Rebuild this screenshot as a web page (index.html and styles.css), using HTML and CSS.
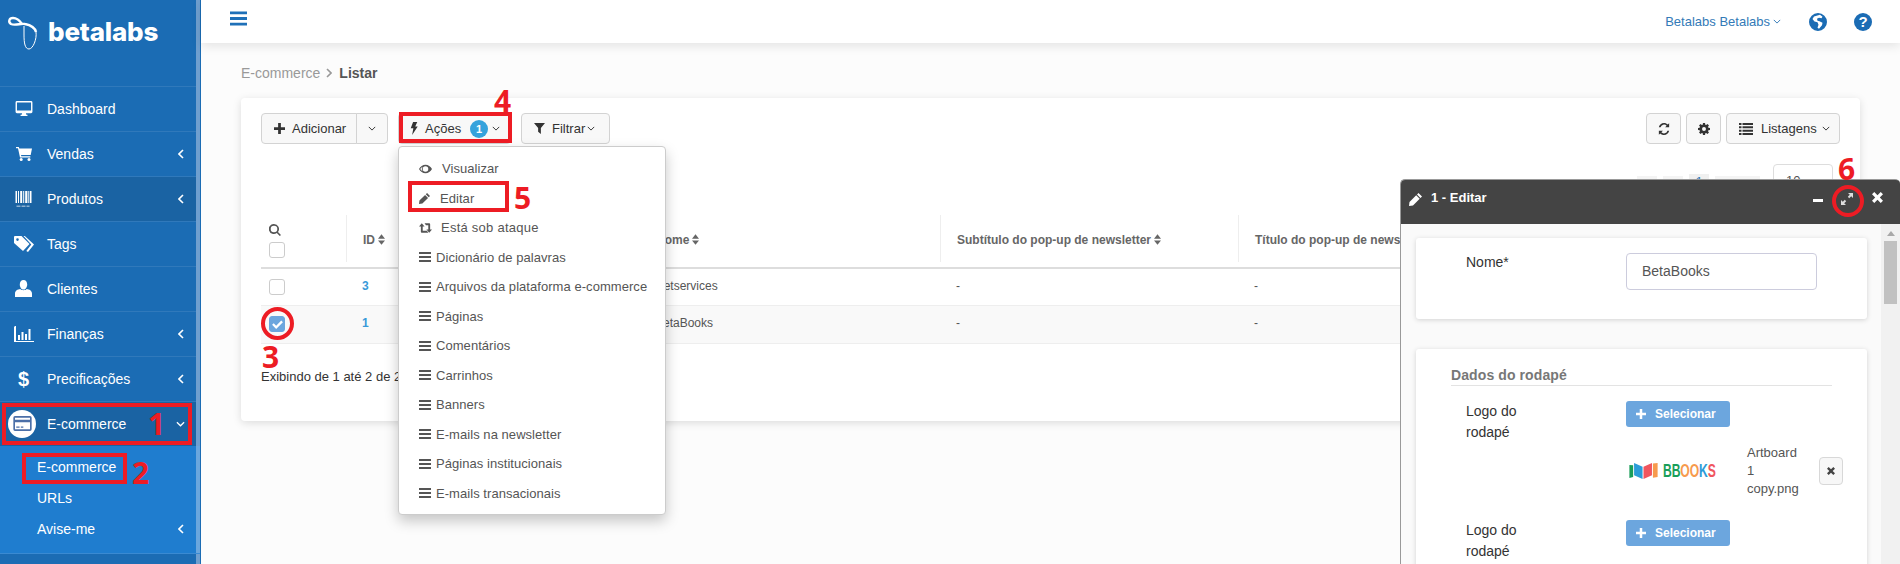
FILE: index.html
```html
<!DOCTYPE html>
<html lang="pt-BR">
<head>
<meta charset="utf-8">
<title>E-commerce - Listar</title>
<link rel="stylesheet" href="styles.css">
</head>
<body>
<svg class="sprite" aria-hidden="true">
  <symbol id="i-desktop" viewBox="0 0 18 16"><path fill-rule="evenodd" d="M1.5 0h15A1.5 1.5 0 0 1 18 1.5v10a1.5 1.5 0 0 1-1.5 1.5H11l.5 1.6h1.2V16H5.300v-1.400h1.200L7 13H1.500A1.500 1.500 0 0 1 0 11.500v-10A1.500 1.500 0 0 1 1.500 0zM1.500 1.500V10h15V1.500z"/></symbol>
  <symbol id="i-cart" viewBox="0 0 16 14"><path d="M0 0h2.800l.5 1.600H16l-1.300 6.300H5l.3 1.300h9v1.400H4L2 1.300H0z"/><circle cx="5.200" cy="12.500" r="1.500"/><circle cx="13" cy="12.500" r="1.500"/></symbol>
  <symbol id="i-barcode" viewBox="0 0 16 16"><path d="M0 0h1.500v12H0zM2.500 0h1v12h-1zM4.700 0h2v12h-2zM7.700 0h1v12h-1zM9.700 0h2.200v12H9.700zM12.800 0h1v12h-1zM14.500 0H16v12h-1.500zM1 14.800h4v.8H1zM6 14.800h4v.8H6zM11 14.800h3v.8h-3z"/></symbol>
  <symbol id="i-tags" viewBox="0 0 20 16"><path fill-rule="evenodd" d="M1 0h6.500L15.500 8 9 15 0 7V1a1 1 0 0 1 1-1zm2.500 2.300a1.300 1.300 0 1 0 0 2.600 1.300 1.300 0 0 0 0-2.600z"/><path d="M9.500 0h1.300L20 8.500 14 16l-1.700-1 5-6.500z"/></symbol>
  <symbol id="i-user" viewBox="0 0 16 16"><path d="M8 0c2.200 0 3.500 1.800 3.500 4.200S10 9 8 9 4.500 6.600 4.500 4.200 5.800 0 8 0zM5 8.500C6 10 10 10 11 8.500c2.500.5 5 1.300 5 4.500v3H0v-3c0-3.200 2.500-4 5-4.500z"/></symbol>
  <symbol id="i-chart" viewBox="0 0 20 16"><path d="M1 0h1v15h18v1H0V1zM4 9h2v5H4zM7.500 6h2v8h-2zM11 8h2v6h-2zM14.500 3h2v11h-2z"/></symbol>
  <symbol id="i-card" viewBox="0 0 22 18"><path fill-rule="evenodd" d="M2 0h18a2 2 0 0 1 2 2v14a2 2 0 0 1-2 2H2a2 2 0 0 1-2-2V2a2 2 0 0 1 2-2zm0 2v2.500h18V2zm0 5.500V16h18V7.500zM3.500 12.500h4V14h-4zm5.500 0h3V14H9z"/></symbol>
  <symbol id="i-plus" viewBox="0 0 12 12"><path d="M4.500 0h3v4.500H12v3H7.500V12h-3V7.500H0v-3h4.500z"/></symbol>
  <symbol id="i-bolt" viewBox="0 0 8 14"><path d="M3 0h4.500L5.300 4.800H8L2 14l1.300-7.200H.5z"/></symbol>
  <symbol id="i-filter" viewBox="0 0 12 12"><path d="M0 0h12L7.500 5.500V12l-3-2.500v-4z"/></symbol>
  <symbol id="i-refresh" viewBox="0 0 14 14"><path d="M7 0c1.800 0 3.300.7 4.400 1.800L13 .3v4.700H8.300l1.800-1.800A4.200 4.200 0 0 0 3 5H1C1.600 2.100 4 0 7 0zM13 9C12.400 11.900 10 14 7 14c-1.800 0-3.300-.7-4.400-1.800L1 13.700V9h4.700l-1.800 1.800A4.200 4.200 0 0 0 11 9z"/></symbol>
  <symbol id="i-cog" viewBox="0 0 14 14"><path fill-rule="evenodd" d="M5.800 0h2.400l.3 1.900 1 .4L11 1.200l1.800 1.800-1.100 1.500.4 1 1.900.3v2.400l-1.900.3-.4 1 1.100 1.500L11 12.800l-1.500-1.100-1 .4-.3 1.900H5.800l-.3-1.900-1-.4L3 12.800 1.200 11l1.100-1.500-.4-1L0 8.200V5.800l1.900-.3.4-1L1.200 3 3 1.200l1.500 1.100 1-.4zM7 4.700a2.300 2.300 0 1 0 0 4.600 2.300 2.300 0 0 0 0-4.600z"/></symbol>
  <symbol id="i-list" viewBox="0 0 14 12"><path d="M0 0h2.500v2H0zM3.500 0H14v2H3.500zM0 3.300h2.500v2H0zM3.500 3.300H14v2H3.500zM0 6.700h2.500v2H0zM3.500 6.700H14v2H3.500zM0 10h2.500v2H0zM3.500 10H14v2H3.500z"/></symbol>
  <symbol id="i-search" viewBox="0 0 12 12"><path fill-rule="evenodd" d="M5 0a5 5 0 0 1 4 8l3 3-1.200 1-3-3A5 5 0 1 1 5 0zm0 1.700a3.300 3.300 0 1 0 0 6.600 3.300 3.300 0 0 0 0-6.600z"/></symbol>
  <symbol id="i-sort" viewBox="0 0 8 12"><path d="M4 0l4 5H0zM0 7h8l-4 5z"/></symbol>
  <symbol id="i-eye" viewBox="0 0 14 9"><path fill-rule="evenodd" d="M7 0c3 0 5.500 1.800 7 4.500C12.500 7.200 10 9 7 9S1.500 7.200 0 4.500C1.500 1.800 4 0 7 0zm0 1.500a3 3 0 1 0 0 6 3 3 0 0 0 0-6zM1.300 4.500c.7 1 1.500 1.800 2.500 2.400a4 4 0 0 1 0-4.800c-1 .6-1.800 1.400-2.500 2.400z"/></symbol>
  <symbol id="i-pencil" viewBox="0 0 13 13"><path d="M9.500 0L13 3.500l-1.500 1.500L8 1.500zM7.200 2.300l3.500 3.500L4 12.500 0 13l.5-4z"/></symbol>
  <symbol id="i-retweet" viewBox="0 0 14 10"><path d="M3 0l3 3.500H4V8h4.500L10 10H3a1 1 0 0 1-1-1V3.500H0zM6 0h5a1 1 0 0 1 1 1v5.500h2L11 10 8 6.500h2V2H7.500z"/></symbol>
  <symbol id="i-bars" viewBox="0 0 12 10"><path d="M0 0h12v2H0zM0 4h12v2H0zM0 8h12v2H0z"/></symbol>
  <symbol id="i-expand" viewBox="0 0 12 12"><path d="M7 0h5v5l-1.800-1.800-2 2-1.400-1.400 2-2zM5 12H0V7l1.800 1.800 2-2 1.400 1.400-2 2z"/></symbol>
  <symbol id="i-times" viewBox="0 0 12 12"><path d="M2.500 0L6 3.500 9.500 0 12 2.500 8.500 6 12 9.500 9.500 12 6 8.500 2.500 12 0 9.500 3.500 6 0 2.500z"/></symbol>
  <symbol id="i-globe" viewBox="0 0 18 18"><path fill-rule="evenodd" d="M9 0a9 9 0 1 1 0 18A9 9 0 0 1 9 0zM5 3.500L3.500 6l2 2.500 3 .8 1 2.500-1 3 1.500 1 3-3.500.5-2.500-3-1.500-2-.5-.5-2 2-1 2.500.5 1-1.500-2.500-2z"/></symbol>
  <symbol id="i-check" viewBox="0 0 12 10"><path d="M1.800 3.600L4.500 6.300 10.200.6 12 2.400 4.500 9.900 0 5.400z"/></symbol>
</svg>

<div class="app">
  <aside class="sidebar">
    <div class="brand">
      <svg class="brand-mark" viewBox="0 0 32 36"><path d="M6 3C2 3 1 7 4 9c4 2 10-1 14 0 5 1 10 4 11 8" fill="none" stroke="#fff" stroke-width="2.400"/><path d="M6 3c4 0 7 3 9 6" fill="none" stroke="#fff" stroke-width="2.400"/><path d="M29 17c1 7-3 17-7 17s-5-6-5-14v-9" fill="none" stroke="#fff" stroke-width="1"/></svg>
      <span class="brand-name">betalabs</span>
    </div>
    <nav class="menu">
      <a class="item"><span class="ico"><svg class="i-desktop"><use href="#i-desktop"/></svg></span><span class="label">Dashboard</span></a>
      <a class="item"><span class="ico"><svg class="i-cart"><use href="#i-cart"/></svg></span><span class="label">Vendas</span><svg class="chev" viewBox="0 0 6 10"><path d="M5 1L1 5l4 4"/></svg></a>
      <a class="item is-dark"><span class="ico"><svg class="i-barcode"><use href="#i-barcode"/></svg></span><span class="label">Produtos</span><svg class="chev" viewBox="0 0 6 10"><path d="M5 1L1 5l4 4"/></svg></a>
      <a class="item"><span class="ico"><svg class="i-tags"><use href="#i-tags"/></svg></span><span class="label">Tags</span></a>
      <a class="item"><span class="ico"><svg class="i-user"><use href="#i-user"/></svg></span><span class="label">Clientes</span></a>
      <a class="item"><span class="ico"><svg class="i-chart"><use href="#i-chart"/></svg></span><span class="label">Finanças</span><svg class="chev" viewBox="0 0 6 10"><path d="M5 1L1 5l4 4"/></svg></a>
      <a class="item"><span class="ico"><span class="dollar">$</span></span><span class="label">Precificações</span><svg class="chev" viewBox="0 0 6 10"><path d="M5 1L1 5l4 4"/></svg></a>
      <a class="item is-dark"><span class="ico"><span class="round"><svg class="i-card"><use href="#i-card"/></svg></span></span><span class="label">E-commerce</span><svg class="chev-down" viewBox="0 0 10 6"><path d="M1 1l4 4 4-4"/></svg></a>
      <div class="submenu">
        <a class="subitem">E-commerce</a>
        <a class="subitem">URLs</a>
        <a class="subitem">Avise-me<svg class="chev" viewBox="0 0 6 10"><path d="M5 1L1 5l4 4"/></svg></a>
      </div>
    </nav>
  </aside>

  <div class="main">
    <header class="topbar">
      <svg class="burger"><use href="#i-bars"/></svg>
      <div class="top-right">
        <span class="account">Betalabs Betalabs<svg class="caret" viewBox="0 0 10 6"><path d="M1 1l4 4 4-4"/></svg></span>
        <svg class="globe"><use href="#i-globe"/></svg>
        <span class="help">?</span>
      </div>
    </header>

    <div class="content">
      <div class="crumb"><span class="crumb-root">E-commerce</span><svg class="crumb-sep" viewBox="0 0 6 10"><path d="M1 1l4 4-4 4"/></svg><b>Listar</b></div>
      <section class="card">
        <div class="toolbar">
          <div class="split">
            <button class="btn btn-add"><svg class="bi"><use href="#i-plus"/></svg>Adicionar</button>
            <button class="btn btn-more"><svg class="caret" viewBox="0 0 10 6"><path d="M1 1l4 4 4-4"/></svg></button>
          </div>
          <div class="actions">
            <button class="btn btn-actions"><svg class="bi bolt"><use href="#i-bolt"/></svg>Ações<span class="badge">1</span><svg class="caret" viewBox="0 0 10 6"><path d="M1 1l4 4 4-4"/></svg></button>
            <ul class="dropdown">
              <li class="dd dd-a"><svg class="di eye"><use href="#i-eye"/></svg>Visualizar</li>
              <li class="dd dd-b"><svg class="di"><use href="#i-pencil"/></svg>Editar</li>
              <li class="dd dd-c"><svg class="di"><use href="#i-retweet"/></svg>Está sob ataque</li>
              <li class="dd"><svg class="di"><use href="#i-bars"/></svg>Dicionário de palavras</li>
              <li class="dd"><svg class="di"><use href="#i-bars"/></svg>Arquivos da plataforma e-commerce</li>
              <li class="dd"><svg class="di"><use href="#i-bars"/></svg>Páginas</li>
              <li class="dd"><svg class="di"><use href="#i-bars"/></svg>Comentários</li>
              <li class="dd"><svg class="di"><use href="#i-bars"/></svg>Carrinhos</li>
              <li class="dd"><svg class="di"><use href="#i-bars"/></svg>Banners</li>
              <li class="dd"><svg class="di"><use href="#i-bars"/></svg>E-mails na newsletter</li>
              <li class="dd"><svg class="di"><use href="#i-bars"/></svg>Páginas institucionais</li>
              <li class="dd"><svg class="di"><use href="#i-bars"/></svg>E-mails transacionais</li>
            </ul>
          </div>
          <button class="btn btn-filter"><svg class="bi"><use href="#i-filter"/></svg>Filtrar<svg class="caret" viewBox="0 0 10 6"><path d="M1 1l4 4 4-4"/></svg></button>
          <div class="toolbar-right">
            <button class="btn btn-icon"><svg class="bi"><use href="#i-refresh"/></svg></button>
            <button class="btn btn-icon"><svg class="bi"><use href="#i-cog"/></svg></button>
            <button class="btn btn-list"><svg class="bi list"><use href="#i-list"/></svg>Listagens<svg class="caret" viewBox="0 0 10 6"><path d="M1 1l4 4 4-4"/></svg></button>
          </div>
        </div>

        <div class="pager"><span class="page-blur"></span><span class="page-blur"></span><span class="page-cur">1</span><span class="page-blur wide"></span><span class="page-size">10</span></div>

        <div class="table-wrap">
          <table class="grid">
            <colgroup><col class="c-check"><col class="c-id"><col class="c-name"><col class="c-sub"><col class="c-title"><col class="c-rest"></colgroup>
            <thead>
              <tr>
                <th class="th-check"><svg class="search"><use href="#i-search"/></svg><span class="box"></span></th>
                <th><span class="th-in">ID<svg class="sort"><use href="#i-sort"/></svg></span></th>
                <th><span class="th-in">Nome<svg class="sort"><use href="#i-sort"/></svg></span></th>
                <th><span class="th-in">Subtítulo do pop-up de newsletter<svg class="sort"><use href="#i-sort"/></svg></span></th>
                <th><span class="th-in">Título do pop-up de newsletter<svg class="sort"><use href="#i-sort"/></svg></span></th>
                <th></th>
              </tr>
            </thead>
            <tbody>
              <tr>
                <td class="td-check"><span class="box"></span></td>
                <td class="td-id">3</td><td>Netservices</td><td>-</td><td>-</td><td></td>
              </tr>
              <tr class="row-alt">
                <td class="td-check"><span class="box box-on"><svg class="tick"><use href="#i-check"/></svg></span></td>
                <td class="td-id">1</td><td>BetaBooks</td><td>-</td><td>-</td><td></td>
              </tr>
            </tbody>
          </table>
        </div>
        <p class="count">Exibindo de 1 até 2 de 2 registros</p>
      </section>
    </div>
  </div>
</div>

<section class="window">
  <header class="win-head">
    <svg class="win-pencil"><use href="#i-pencil"/></svg>
    <span class="win-title">1 - Editar</span>
    <span class="win-min"></span>
    <svg class="win-expand"><use href="#i-expand"/></svg>
    <svg class="win-close"><use href="#i-times"/></svg>
  </header>
  <div class="win-body">
    <div class="win-scroll">
      <div class="form-card form-card-a">
        <div class="field">
          <label class="f-label f-label-top">Nome*</label>
          <span class="input">BetaBooks</span>
        </div>
      </div>
      <div class="form-card form-card-b">
        <h3 class="legend">Dados do rodapé</h3>
        <div class="field field-file">
          <label class="f-label">Logo do rodapé</label>
          <button class="select-btn"><svg class="bi"><use href="#i-plus"/></svg>Selecionar</button>
        </div>
        <div class="preview">
          <div class="bb-logo">
            <svg class="bb-book" viewBox="0 0 30 17"><path fill="#1a9e5a" d="M0 2l4 .5V15L0 16z"/><path fill="#2b9cd8" d="M5 0l9 4v13l-9-4z"/><path fill="#f0565f" d="M15 4l9-4v13l-9 4z"/><path fill="#f79a4d" d="M25 .5l5-.5v15l-5 .8z"/></svg>
            <span class="bb-text"><i class="g">BB</i><i class="o">OO</i><i class="b">K</i><i class="r">S</i></span>
          </div>
          <span class="file-name">Artboard 1 copy.png</span>
          <button class="del"><svg class="del-x"><use href="#i-times"/></svg></button>
        </div>
        <div class="field field-file">
          <label class="f-label">Logo do rodapé</label>
          <button class="select-btn"><svg class="bi"><use href="#i-plus"/></svg>Selecionar</button>
        </div>
      </div>
    </div>
    <div class="scrollbar">
      <span class="sb-up"></span>
      <span class="sb-thumb"></span>
    </div>
  </div>
</section>

<div class="marks">
  <span class="mark m-box1"></span><span class="num n1">1</span>
  <span class="mark m-box2"></span><span class="num n2">2</span>
  <span class="mark m-circle3"></span><span class="num n3">3</span>
  <span class="mark m-box4"></span><span class="num n4">4</span>
  <span class="mark m-box5"></span><span class="num n5">5</span>
  <span class="mark m-circle6"></span><span class="num n6">6</span>
</div>
</body>
</html>
```
FILE: styles.css
```css
* { box-sizing: border-box; }
html, body { margin: 0; height: 564px; overflow: hidden; }
body { font-family: "Liberation Sans", Arial, sans-serif; font-size: 14px; color: #333; background: #fcfcfc; position: relative; }
.sprite { position: absolute; width: 0; height: 0; }
svg { fill: currentColor; display: block; flex: none; }
ul { list-style: none; margin: 0; padding: 0; }
button { font-family: inherit; }

.app { display: flex; height: 564px; }

/* sidebar */
.sidebar { width: 201px; flex: none; background: #1b6cb4; border-right: 1px solid #1b6cb4; box-shadow: inset -4px 0 0 #6f9fcf; color: #fff; }
.brand { height: 86px; display: flex; align-items: flex-start; padding: 15px 0 0 7px; }
.brand-mark { width: 32px; height: 36px; }
.brand-name { font-family: "Inter", sans-serif; font-weight: 800; font-size: 26px; line-height: 32px; letter-spacing: -.2px; margin-left: 9px; margin-top: 1px; }
.menu { display: flex; flex-direction: column; margin-right: 4px; }
.item { height: 45px; display: flex; align-items: center; border-top: 1px solid #3079bb; padding-bottom: 1px; position: relative; }
.item.is-dark { background: #1a63a3; }
.ico { width: 47px; flex: none; display: flex; justify-content: center; padding-left: 0; }
.label { flex: 1; }
.i-desktop { width: 18px; height: 15px; }
.i-cart { width: 16px; height: 14px; }
.i-barcode { width: 17px; height: 16px; }
.i-tags { width: 20px; height: 16px; }
.i-user { width: 17px; height: 17px; }
.i-chart { width: 20px; height: 16px; }
.dollar { font-weight: 700; font-size: 20px; line-height: 20px; }
.round { width: 28px; height: 28px; border-radius: 50%; background: #fff; display: flex; align-items: center; justify-content: center; margin-left: -3px; color: #4b6fa8; }
.i-card { width: 19px; height: 15px; }
.chev { width: 6px; height: 10px; fill: none; stroke: #fff; stroke-width: 1.600; margin-right: 12px; }
.chev-down { width: 9px; height: 6px; fill: none; stroke: #fff; stroke-width: 1.400; margin-right: 11px; }
.submenu { background: #1f7dcf; padding: 5px 0 0 37px; height: 108px; border-bottom: 1px solid #3a8ad2; margin-right: -4px; box-shadow: inset -4px 0 0 #6aa6dd; }
.subitem { display: flex; align-items: center; justify-content: space-between; height: 31px; padding-right: 4px; }
.subitem .chev { margin-right: 12px; }

/* main */
.main { flex: 1; min-width: 0; display: flex; flex-direction: column; }
.topbar { height: 43px; flex: none; background: #fff; box-shadow: 0 3px 10px rgba(0,0,0,.1); display: flex; align-items: center; justify-content: space-between; padding: 0 28px 7px 29px; position: relative; }
.burger { width: 17px; height: 15px; color: #1f70b8; }
.top-right { display: flex; align-items: center; padding-top: 7px; }
.account { display: flex; align-items: center; font-size: 13px; color: #337ab7; }
.account .caret { stroke: #337ab7; margin-left: 3px; }
.globe { width: 18px; height: 18px; color: #1b6cb4; margin-left: 28px; }
.help { width: 18px; height: 18px; border-radius: 50%; background: #1b6cb4; color: #fff; font-weight: 700; font-size: 15px; line-height: 18px; text-align: center; margin-left: 27px; }
.caret { width: 8px; height: 5px; fill: none; stroke: #333; stroke-width: 1.200; }

.content { padding: 0 40px 0 40px; flex: 1; }
.crumb { display: flex; align-items: center; height: 30px; margin-top: 15px; font-size: 14px; color: #999; }
.crumb-sep { width: 6px; height: 10px; fill: none; stroke: #999; stroke-width: 1.600; margin: 0 7px 0 6px; }
.crumb b { color: #555; }
.card { background: #fff; border-radius: 4px; box-shadow: 0 2px 8px rgba(0,0,0,.13); margin-top: 10px; height: 323px; padding: 15px 20px 0; position: relative; }

.toolbar { display: flex; height: 31px; }
.btn { height: 31px; background: #f8f8f8; border: 1px solid #d3d3d3; border-radius: 4px; font-size: 13px; color: #333; display: inline-flex; align-items: center; padding: 0; }
.bi { width: 11px; height: 11px; margin-right: 7px; }
.split { display: flex; }
.btn-add { width: 96px; border-radius: 4px 0 0 4px; padding-left: 12px; }
.btn-more { width: 32px; margin-left: -1px; border-radius: 0 4px 4px 0; justify-content: center; }
.actions { position: relative; margin-left: 10px; }
.btn-actions { width: 113px; padding-left: 11px; }
.bolt { width: 8px; height: 13px; margin-right: 7px; }
.badge { width: 18px; height: 18px; border-radius: 50%; background: #35a2dc; color: #fff; font-size: 11px; font-weight: 700; line-height: 18px; text-align: center; margin: 0 4px 0 9px; }
.btn-filter { width: 89px; margin-left: 10px; padding-left: 12px; }
.btn-filter .caret { margin-left: 2px; }
.toolbar-right { margin-left: auto; display: flex; gap: 5px; }
.btn-icon { width: 35px; justify-content: center; }
.btn-icon .bi { margin: 0; width: 12px; height: 12px; }
.btn-list { width: 114px; padding-left: 12px; }
.btn-list .bi { width: 14px; height: 12px; margin-right: 8px; }
.btn-list .caret { margin-left: 5px; }

.dropdown { position: absolute; z-index: 5; top: 33px; left: 0; width: 268px; height: 369px; background: #fff; border: 1px solid #ccc; border-radius: 4px; box-shadow: 0 6px 14px rgba(0,0,0,.22); padding: 7px 0 0 20px; }
.dd { height: 29.500px; display: flex; align-items: center; font-size: 13px; color: #555; letter-spacing: .05px; white-space: nowrap; }
.di { width: 12px; height: 10px; margin-right: 5px; color: #555; }
.dd-a .di { width: 13px; margin-right: 10px; }
.dd-b .di { width: 11px; height: 11px; margin-right: 10px; }
.dd-c .di { margin-right: 9px; height: 10px; width: 13px; }
.dd-c { letter-spacing: .25px; }

.pager { position: absolute; top: 66px; right: 27px; width: 196px; height: 34px; display: flex; align-items: center; font-size: 13px; }
.page-blur { width: 20px; height: 10px; background: #f4f4f4; margin-right: 6px; }
.page-blur.wide { width: 45px; }
.page-cur { color: #337ab7; width: 20px; text-align: center; background: #f0f0f0; margin-right: 6px; }
.page-size { width: 60px; height: 34px; border: 1px solid #ddd; border-radius: 4px; padding: 8px 12px; margin-left: auto; color: #555; }

.table-wrap { overflow: hidden; margin: 70px 0 0 0; }
.grid { border-collapse: collapse; table-layout: fixed; width: 1578px; font-size: 12px; color: #555; }
.c-check { width: 85px; } .c-id { width: 293px; } .c-name { width: 301px; } .c-sub { width: 298px; } .c-title { width: 300px; } .c-rest { width: 301px; }
th { height: 54px; padding: 0 0 0 16px; text-align: left; font-weight: 700; vertical-align: middle; border-bottom: 2px solid #ddd; }
.th-in { display: flex; align-items: center; height: 47px; margin: 0 0 4px -16px; padding: 2px 0 0 16px; border-left: 1px solid #eee; white-space: nowrap; font-size: 12px; color: #666; }
.sort { width: 7px; height: 11px; margin-left: 3px; }
.th-check { padding: 0 0 0 8px; }
.search { width: 12px; height: 12px; color: #555; margin-bottom: 6px; }
.box { display: block; width: 16px; height: 16px; border: 1px solid #ccc; border-radius: 3px; background: #fff; }
.box-on { background: #6ca6de; border-color: #6ca6de; display: flex; align-items: center; justify-content: center; color: #fff; }
.tick { width: 11px; height: 9px; }
td { padding: 0 0 2px 16px; border-bottom: 1px solid #eee; height: 37px; }
.row-alt td { background: #f9f9f9; height: 38px; }
.td-check { padding: 0 0 0 8px; }
.td-id { color: #3a9ad9; font-weight: 700; }
.count { margin: 25px 0 0; font-size: 13px; color: #333; }

/* floating window */
.window { position: absolute; z-index: 10; left: 1400px; top: 179px; width: 500px; height: 385px; display: flex; flex-direction: column; border-left: 1px solid #999; border-top: 1px solid #999; border-radius: 5px 5px 0 0; background: #fafafa; }
.win-head { height: 44px; background: #444; border-radius: 4px 4px 0 0; display: flex; align-items: center; color: #fff; padding: 0 0 9px 8px; flex: none; }
.win-pencil { width: 13px; height: 13px; margin-top: 3px; }
.win-title { font-weight: 700; font-size: 13px; margin-left: 9px; }
.win-min { width: 10px; height: 3px; background: #fff; margin-left: auto; margin-top: 6px; }
.win-expand { width: 12px; height: 12px; margin: 2px 0 0 18px; color: #ddd; }
.win-close { width: 11px; height: 11px; margin: 0 17px 0 19px; }
.win-body { flex: 1; display: flex; min-height: 0; }
.win-scroll { flex: 1; padding: 14px 14px 0 15px; overflow: hidden; }
.form-card { background: #fff; border-radius: 3px; box-shadow: 0 1px 5px rgba(0,0,0,.16); }
.form-card-a { height: 81px; padding: 15px 0 0 50px; }
.form-card-b { margin-top: 30px; padding: 18px 35px 0 35px; height: 300px; }
.field { display: flex; }
.f-label { width: 160px; flex: none; line-height: 21px; color: #333; }
.f-label-top { margin-top: -1px; }
.input { width: 191px; height: 37px; border: 1px solid #ccd; border-radius: 4px; padding: 0 15px; line-height: 35px; color: #555; }
.legend { margin: 0; font-size: 14px; font-weight: 700; color: #777; border-bottom: 1px solid #e3e3e3; padding-bottom: 2px; height: 19px; line-height: 16px; letter-spacing: .1px; }
.field-file { padding: 15px 0 0 15px; }
.field-file .f-label { width: 160px; padding-right: 70px; }
.select-btn { width: 104px; height: 26px; background: #6ca6de; border: 0; border-radius: 3px; color: #fff; font-size: 12px; font-weight: 700; display: flex; align-items: center; padding-left: 10px; }
.select-btn .bi { width: 10px; height: 10px; margin-right: 9px; }
.preview { display: flex; align-items: center; height: 56px; margin: 0 0 6px 175px; }
.bb-logo { width: 121px; flex: none; display: flex; align-items: center; padding-left: 3px; }
.bb-book { width: 29px; height: 16px; }
.bb-text { display: inline-block; font-weight: 700; font-size: 19px; margin-left: 5px; line-height: 18px; letter-spacing: -.2px; transform: scaleX(.64); transform-origin: left center; }
.bb-text i { font-style: normal; }
.g { color: #1a9e5a; } .o { color: #f79a4d; } .b { color: #2b9cd8; } .r { color: #f0565f; }
.file-name { width: 50px; font-size: 13px; line-height: 18px; color: #555; flex: none; }
.del { width: 24px; height: 28px; margin-left: 22px; flex: none; background: #f7f7f7; border: 1px solid #d8d8d8; border-radius: 4px; display: flex; align-items: center; justify-content: center; padding: 0; color: #444; }
.del-x { width: 8px; height: 8px; }
.scrollbar { width: 19px; background: #f1f1f1; display: flex; flex-direction: column; align-items: center; flex: none; }
.sb-up { width: 0; height: 0; border: 4px solid transparent; border-top: 0; border-bottom: 5px solid #a8a8a8; margin-top: 7px; }
.sb-thumb { width: 13px; height: 63px; background: #c1c1c1; margin-top: 5px; }

/* tutorial marks */
.marks { position: absolute; inset: 0; z-index: 20; pointer-events: none; }
.mark { position: absolute; border: 4px solid #ed1c24; }
.m-box1 { left: 2px; top: 403px; width: 190px; height: 42px; }
.m-box2 { left: 22px; top: 453px; width: 105px; height: 31px; }
.m-circle3 { left: 261px; top: 307px; width: 33px; height: 33px; border-radius: 50%; }
.m-box4 { left: 399px; top: 112px; width: 113px; height: 31px; }
.m-box5 { left: 408px; top: 181px; width: 101px; height: 31px; }
.m-circle6 { left: 1832px; top: 185px; width: 32px; height: 32px; border-radius: 50%; }
.num { position: absolute; font-family: "Open Sans", sans-serif; font-weight: 700; font-size: 30px; line-height: 30px; color: #ed1c24; }
.n1 { left: 148px; top: 409px; }
.n2 { left: 132px; top: 458px; }
.n3 { left: 262px; top: 342px; }
.n4 { left: 494px; top: 86px; }
.n5 { left: 514px; top: 183px; }
.n6 { left: 1838px; top: 154px; }
```
